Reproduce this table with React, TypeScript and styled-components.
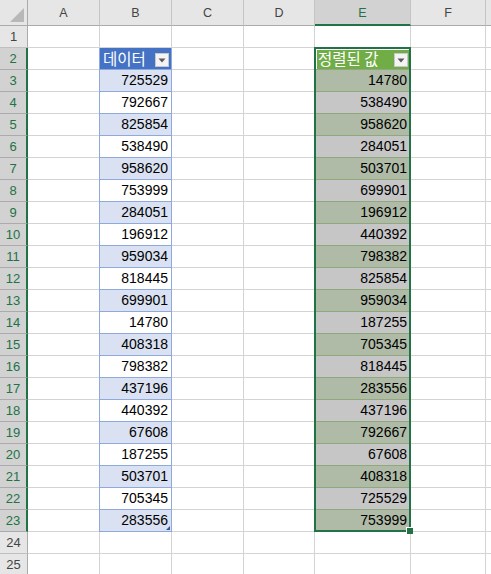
import React from 'react';
import styled, { createGlobalStyle, css } from 'styled-components';

const GlobalStyle = createGlobalStyle`
  html, body { margin: 0; padding: 0; background: #ffffff; }
  body { font-family: "Liberation Sans", Arial, sans-serif; }
  * { box-sizing: border-box; }
`;

const GREEN = '#217346';

const Sheet = styled.div`
  display: grid;
  grid-template-columns: 28px 72px 72px 72px 71px 96px 75px 1fr;
  grid-template-rows: 26px repeat(25, 22px);
  width: 491px;
  height: 574px;
  overflow: hidden;
  background: #ffffff;
`;

const Corner = styled.div`
  position: relative;
  background: #e6e6e6;
  border-right: 1px solid #ababab;
  border-bottom: 1px solid #ababab;
  &::after {
    content: '';
    position: absolute;
    right: 3px;
    bottom: 3px;
    width: 0;
    height: 0;
    border-style: solid;
    border-width: 0 0 14px 14px;
    border-color: transparent transparent #b8b8b8 transparent;
  }
`;

const ColHeader = styled.div<{ $active?: boolean; $last?: boolean }>`
  display: flex;
  align-items: center;
  justify-content: center;
  font-size: 12.5px;
  color: #444444;
  background: #e6e6e6;
  border-right: ${(p) => (p.$last ? 'none' : '1px solid #c4c4c4')};
  border-bottom: 1px solid #ababab;
  padding-top: 1px;
  ${(p) =>
    p.$active &&
    css`
      background: #d2d2d2;
      color: ${GREEN};
      border-bottom: 2px solid ${GREEN};
      padding-top: 2px;
    `}
`;

const RowHeader = styled.div<{ $active?: boolean }>`
  display: flex;
  align-items: center;
  justify-content: center;
  font-size: 13px;
  color: #444444;
  background: #e6e6e6;
  border-right: 1px solid #ababab;
  border-bottom: 1px solid #c0c0c0;
  ${(p) =>
    p.$active &&
    css`
      background: #d2d2d2;
      color: ${GREEN};
      border-right: 2px solid ${GREEN};
      border-bottom-color: #ababab;
    `}
`;

type Tone =
  | 'plain'
  | 'blueHead'
  | 'blueBand'
  | 'blueWhite'
  | 'greenHead'
  | 'greenBand'
  | 'greenWhite';

const toneStyles: Record<Tone, ReturnType<typeof css>> = {
  plain: css`
    background: #ffffff;
  `,
  blueHead: css`
    background: #4472c4;
    color: #ffffff;
    border-right-color: #8ea9db;
    border-bottom-color: #8ea9db;
    box-shadow: -1px 0 0 #8ea9db;
  `,
  blueBand: css`
    background: #d9e1f2;
    border-right-color: #8ea9db;
    border-bottom-color: #8ea9db;
    box-shadow: -1px 0 0 #8ea9db;
  `,
  blueWhite: css`
    background: #ffffff;
    border-right-color: #8ea9db;
    border-bottom-color: #8ea9db;
    box-shadow: -1px 0 0 #8ea9db;
  `,
  greenHead: css`
    background: #70ad47;
    color: #ffffff;
    border-bottom-color: #8fa97c;
    box-shadow: inset 2px 2px 0 #ffffff, inset -1px 0 0 #ffffff;
  `,
  greenBand: css`
    background: #afbba7;
    border-bottom-color: #8fa97c;
  `,
  greenWhite: css`
    background: #c6c6c6;
    border-bottom-color: #8fa97c;
  `,
};

const Cell = styled.div<{ $tone: Tone; $head?: boolean; $corner?: boolean }>`
  position: relative;
  display: flex;
  align-items: center;
  justify-content: ${(p) => (p.$head ? 'flex-start' : 'flex-end')};
  padding: 0 3px 0 ${(p) => (p.$head ? '3px' : '3px')};
  font-size: 14px;
  line-height: 21px;
  color: #000000;
  white-space: nowrap;
  border-right: 1px solid #d4d4d4;
  border-bottom: 1px solid #d4d4d4;
  ${(p) => toneStyles[p.$tone]}
  ${(p) =>
    p.$corner &&
    css`
      &::after {
        content: '';
        position: absolute;
        right: 1px;
        bottom: 1px;
        width: 0;
        height: 0;
        border-style: solid;
        border-width: 0 0 4px 4px;
        border-color: transparent transparent #2f5597 transparent;
      }
    `}
`;

const HeadLabel = styled.span`
  font-family: "Noto Sans CJK KR", "Noto Sans", sans-serif;
  font-size: 15.5px;
  font-weight: 400;
  line-height: 21px;
  color: #ffffff;
`;

const FilterButton = styled.span`
  display: flex;
  align-items: center;
  justify-content: center;
  margin-left: auto;
  margin-right: -1px;
  margin-top: 3px;
  width: 14px;
  height: 14px;
  background: #f4f4f4;
  border: 1px solid #c8c8c8;
`;

const Selection = styled.div`
  position: absolute;
  z-index: 3;
  top: -1px;
  left: -1px;
  width: 97px;
  height: calc(22px * 22 + 1px);
  border: 2px solid ${GREEN};
  pointer-events: none;
`;

const FillHandle = styled.span`
  position: absolute;
  right: -4px;
  bottom: -4px;
  width: 7px;
  height: 7px;
  background: ${GREEN};
  border-top: 1px solid #ffffff;
  border-left: 1px solid #ffffff;
`;

const bData = [
  725529, 792667, 825854, 538490, 958620, 753999, 284051, 196912, 959034, 818445, 699901,
  14780, 408318, 798382, 437196, 440392, 67608, 187255, 503701, 705345, 283556,
];
const eData = [
  14780, 538490, 958620, 284051, 503701, 699901, 196912, 440392, 798382, 825854, 959034,
  187255, 705345, 818445, 283556, 437196, 792667, 67608, 408318, 725529, 753999,
];

const columns = ['A', 'B', 'C', 'D', 'E', 'F', ''];

const Arrow = () => (
  <svg width="8" height="5" viewBox="0 0 8 5">
    <path d="M0.5 0.5 L7.5 0.5 L4 4.5 Z" fill="#5a5a5a" />
  </svg>
);

export default function App() {
  const rows = Array.from({ length: 25 }, (_, i) => i + 1);
  return (
    <>
      <GlobalStyle />
      <Sheet>
        <Corner />
        {columns.map((c, i) => (
          <ColHeader key={`h${i}`} $active={c === 'E'} $last={i === columns.length - 1}>
            {c}
          </ColHeader>
        ))}
        {rows.map((r) => {
          const inTable = r >= 2 && r <= 23;
          const dataIdx = r - 3;
          const odd = r % 2 === 1;
          return (
            <React.Fragment key={r}>
              <RowHeader $active={inTable}>{r}</RowHeader>
              <Cell $tone="plain" />
              {r === 2 ? (
                <Cell $tone="blueHead" $head>
                  <HeadLabel>데이터</HeadLabel>
                  <FilterButton>
                    <Arrow />
                  </FilterButton>
                </Cell>
              ) : r >= 3 && r <= 23 ? (
                <Cell $tone={odd ? 'blueBand' : 'blueWhite'} $corner={r === 23}>
                  {bData[dataIdx]}
                </Cell>
              ) : (
                <Cell $tone="plain" />
              )}
              <Cell $tone="plain" />
              <Cell $tone="plain" />
              {r === 2 ? (
                <Cell $tone="greenHead" $head>
                  <HeadLabel>정렬된 값</HeadLabel>
                  <FilterButton>
                    <Arrow />
                  </FilterButton>
                  <Selection>
                    <FillHandle />
                  </Selection>
                </Cell>
              ) : r >= 3 && r <= 23 ? (
                <Cell $tone={odd ? 'greenBand' : 'greenWhite'}>{eData[dataIdx]}</Cell>
              ) : (
                <Cell $tone="plain" />
              )}
              <Cell $tone="plain" />
              <Cell $tone="plain" />
            </React.Fragment>
          );
        })}
      </Sheet>
    </>
  );
}
